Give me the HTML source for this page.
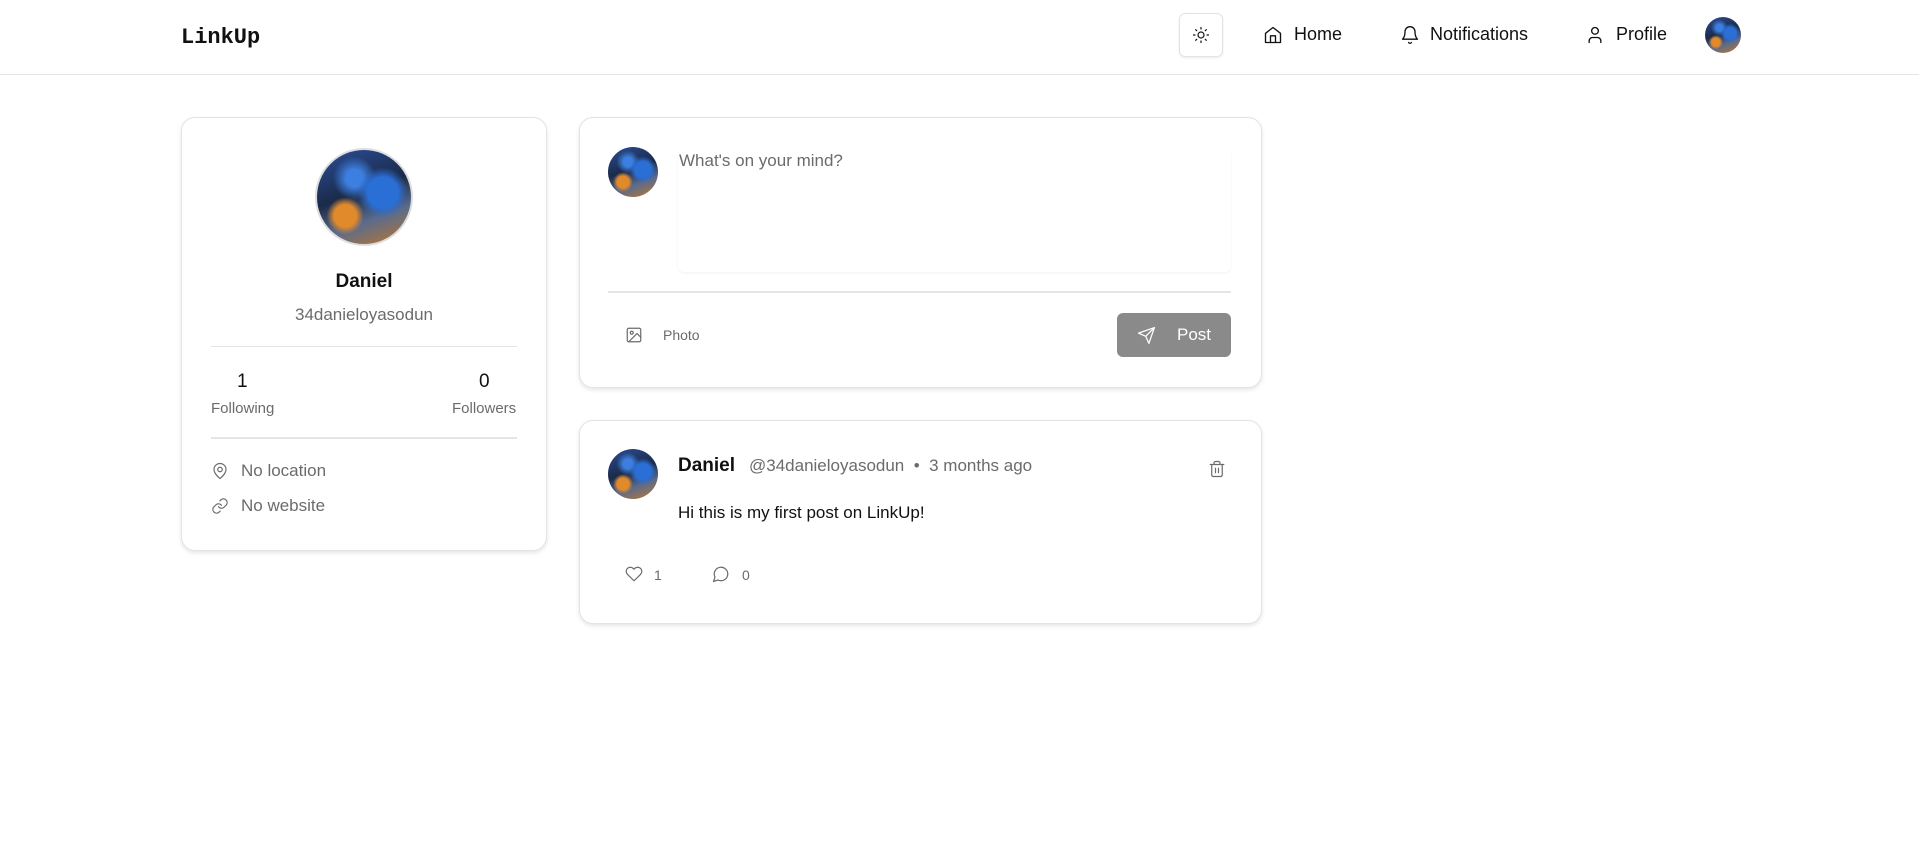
<!DOCTYPE html>
<html><head><meta charset="utf-8"><style>
*{box-sizing:border-box;margin:0;padding:0}
body{width:1919px;height:867px;background:#fff;font-family:"Liberation Sans",sans-serif;color:#111;position:relative;overflow:hidden}
.abs{position:absolute}
.hdr{left:0;top:0;width:1919px;height:75px;border-bottom:1px solid #e5e5e5}
.logo{left:181px;top:25px;font:bold 22px "Liberation Mono",monospace}
.nav{font-size:18px;top:24px}
.card{position:absolute;border:1px solid #e3e3e3;border-radius:14px;box-shadow:0 2px 4px rgba(0,0,0,.1);background:#fff}
.av{position:absolute;border-radius:50%;background:
radial-gradient(circle at 30% 70%,#e08a2c 0 12%,transparent 20%),
radial-gradient(circle at 70% 45%,#2a6fd6 0 18%,transparent 30%),
radial-gradient(circle at 40% 30%,#3d7fe0 0 10%,transparent 25%),
linear-gradient(160deg,#2b4f9a,#1b2a48 45%,#5a6b8c 70%,#c0772a);}
.gray{color:#6b6b6b}
svg{position:absolute;fill:none;stroke:currentColor;stroke-width:1.6;stroke-linecap:round;stroke-linejoin:round}
.hr{position:absolute;height:2px;background:#e5e5e5}
</style></head><body>
<div class="abs hdr"></div>
<div class="abs logo">LinkUp</div>
<div class="abs" style="left:1179px;top:13px;width:44px;height:44px;border:1px solid #e3e3e3;border-radius:6px;box-shadow:0 1px 2px rgba(0,0,0,.08)"></div>
<svg style="left:1192px;top:26px" width="18" height="18" viewBox="0 0 24 24"><circle cx="12" cy="12" r="4"/><path d="M12 2v2M12 20v2M4.9 4.9l1.4 1.4M17.7 17.7l1.4 1.4M2 12h2M20 12h2M6.3 17.7l-1.4 1.4M19.1 4.9l-1.4 1.4"/></svg>
<svg style="left:1263px;top:25px" width="20" height="20" viewBox="0 0 24 24"><path d="M3 10l9-7 9 7v11H3z"/><path d="M9 21v-8h6v8"/></svg>
<div class="abs nav" style="left:1294px">Home</div>
<svg style="left:1400px;top:25px" width="20" height="20" viewBox="0 0 24 24"><path d="M6 8a6 6 0 0112 0c0 7 3 9 3 9H3s3-2 3-9"/><path d="M10.3 21a1.9 1.9 0 003.4 0"/></svg>
<div class="abs nav" style="left:1430px">Notifications</div>
<svg style="left:1585px;top:25px" width="20" height="20" viewBox="0 0 24 24"><circle cx="12" cy="7" r="4"/><path d="M19 21v-2a4 4 0 00-4-4H9a4 4 0 00-4 4v2"/></svg>
<div class="abs nav" style="left:1616px">Profile</div>
<div class="av" style="left:1705px;top:17px;width:36px;height:36px"></div>

<div class="card" style="left:181px;top:117px;width:366px;height:434px"></div>
<div class="av" style="left:315px;top:148px;width:98px;height:98px;border:2px solid #ddd"></div>
<div class="abs" style="left:181px;width:366px;text-align:center;top:271px;font-weight:bold;font-size:19px">Daniel</div>
<div class="abs gray" style="left:181px;width:366px;text-align:center;top:305px;font-size:17px">34danieloyasodun</div>
<div class="hr" style="left:211px;top:346px;width:306px;height:1px"></div>
<div class="abs" style="left:237px;top:371px;font-size:19px">1</div>
<div class="abs gray" style="left:211px;top:400px;font-size:15px">Following</div>
<div class="abs" style="left:479px;top:371px;font-size:19px">0</div>
<div class="abs gray" style="left:452px;top:400px;font-size:15px">Followers</div>
<div class="hr" style="left:211px;top:437px;width:306px"></div>
<svg class="gray" style="left:211px;top:462px" width="18" height="18" viewBox="0 0 24 24"><path d="M20 10c0 6-8 12-8 12s-8-6-8-12a8 8 0 0116 0z"/><circle cx="12" cy="10" r="3"/></svg>
<div class="abs gray" style="left:241px;top:461px;font-size:17px">No location</div>
<svg class="gray" style="left:211px;top:497px" width="18" height="18" viewBox="0 0 24 24"><path d="M10 13a5 5 0 007.5.5l3-3a5 5 0 00-7-7l-1.7 1.7"/><path d="M14 11a5 5 0 00-7.5-.5l-3 3a5 5 0 007 7l1.7-1.7"/></svg>
<div class="abs gray" style="left:241px;top:496px;font-size:17px">No website</div>

<div class="card" style="left:579px;top:117px;width:683px;height:271px"></div>
<div class="av" style="left:608px;top:147px;width:50px;height:50px"></div>
<div class="abs" style="left:678px;top:149px;width:553px;height:123px;border-radius:6px;box-shadow:0 1px 2px rgba(0,0,0,.06)"></div>
<div class="abs gray" style="left:679px;top:151px;font-size:17px">What's on your mind?</div>
<div class="hr" style="left:608px;top:291px;width:623px"></div>
<svg class="gray" style="left:625px;top:326px" width="18" height="18" viewBox="0 0 24 24"><rect x="3" y="3" width="18" height="18" rx="2"/><circle cx="9" cy="9" r="2"/><path d="M21 15l-5-5L5 21"/></svg>
<div class="abs gray" style="left:663px;top:327px;font-size:14px">Photo</div>
<div class="abs" style="left:1117px;top:313px;width:114px;height:44px;background:#8a8a8a;border-radius:6px"></div>
<svg style="left:1137px;top:326px;color:#fff" width="19" height="19" viewBox="0 0 24 24"><path d="M22 2L11 13M22 2l-7 20-4-9-9-4z"/></svg>
<div class="abs" style="left:1177px;top:325px;font-size:17px;color:#fff">Post</div>

<div class="card" style="left:579px;top:420px;width:683px;height:204px"></div>
<div class="av" style="left:608px;top:449px;width:50px;height:50px"></div>
<div class="abs" style="left:678px;top:455px;font-size:19px;font-weight:bold">Daniel</div>
<div class="abs gray" style="left:749px;top:456px;font-size:17px">@34danieloyasodun &nbsp;•&nbsp; 3 months ago</div>
<svg class="gray" style="left:1208px;top:460px" width="18" height="18" viewBox="0 0 24 24"><path d="M3 6h18M19 6v14a2 2 0 01-2 2H7a2 2 0 01-2-2V6M8 6V4a2 2 0 012-2h4a2 2 0 012 2v2M10 11v6M14 11v6"/></svg>
<div class="abs" style="left:678px;top:503px;font-size:17px">Hi this is my first post on LinkUp!</div>
<svg class="gray" style="left:625px;top:565px" width="18" height="18" viewBox="0 0 24 24"><path d="M20.8 4.6a5.5 5.5 0 00-7.8 0L12 5.7l-1-1.1a5.5 5.5 0 00-7.8 7.8l1 1L12 21l7.8-7.6 1-1a5.5 5.5 0 000-7.8z"/></svg>
<div class="abs gray" style="left:654px;top:567px;font-size:14px">1</div>
<svg class="gray" style="left:712px;top:565px" width="18" height="18" viewBox="0 0 24 24"><path d="M7.9 20A9 9 0 104 16.1L2 22z"/></svg>
<div class="abs gray" style="left:742px;top:567px;font-size:14px">0</div>
</body></html>
